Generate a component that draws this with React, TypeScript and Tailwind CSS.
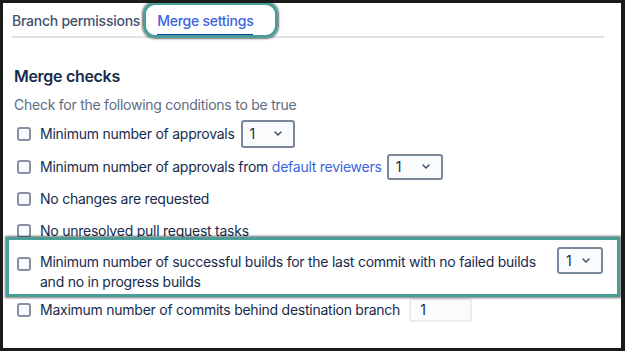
import React from "react";

const Checkbox = () => (
  <span className="block w-[14px] h-[14px] shrink-0 rounded-[3px] border-2 border-[#8590a2] bg-[#fafbfc]" />
);

const Chevron = () => (
  <svg width="8" height="5" viewBox="0 0 8 5" fill="none">
    <path d="M1 1l3 3 3-3" stroke="#42526e" strokeWidth="1.5" strokeLinecap="round" strokeLinejoin="round" />
  </svg>
);

const Select = ({ w, h }: { w: string; h: string }) => (
  <div className={`${w} ${h} shrink-0 flex items-center justify-between pl-[7px] pr-[11px] rounded-[3px] border-2 border-[#7a869a] bg-[#fafbfc] text-[14px] text-[#172b4d]`}>
    <span>1</span>
    <Chevron />
  </div>
);

export default function App() {
  return (
    <div
      className="w-[625px] h-[351px] bg-[#1b1b1b] pt-[3px] pl-[3px] pr-[4px] pb-[3px] tracking-[-0.25px]"
      style={{ fontFamily: "Inter, 'Noto Sans', Arial, sans-serif" }}
    >
      <div className="relative w-full h-full bg-white overflow-hidden">
        {/* Tabs */}
        <div className="ml-[9px] w-[592px] flex gap-[17px] pt-[8px] border-b-2 border-[#dfe1e6] text-[14px] leading-[20px]">
          <div className="pb-[3px] border-b-2 border-transparent text-[#42526e] font-medium">Branch permissions</div>
          <div className="pb-[3px] border-b-2 border-[#0747a6] text-[#3b64e0] font-medium">Merge settings</div>
        </div>

        <div className="pl-[11px] text-[#172b4d]">
          <h2 className="mt-[26px] text-[16px] leading-[24px] font-semibold tracking-[-0.3px] text-[#172b4d]">Merge checks</h2>
          <p className="mt-[7px] text-[14px] leading-[20px] text-[#5e6c84]">Check for the following conditions to be true</p>

          <div className="mt-[2px] flex flex-col text-[14px] leading-[20px]">
            <div className="h-[33px] flex items-center">
              <span className="ml-[3px]"><Checkbox /></span>
              <span className="ml-[9px]">Minimum number of approvals</span>
              <span className="ml-[6px]"><Select w="w-[54px]" h="h-[28px]" /></span>
            </div>
            <div className="h-[33px] flex items-center">
              <span className="ml-[3px]"><Checkbox /></span>
              <span className="ml-[9px]">
                Minimum number of approvals from <span className="text-[#3b64e0]">default reviewers</span>
              </span>
              <span className="ml-[5px]"><Select w="w-[56px]" h="h-[26px]" /></span>
            </div>
            <div className="h-[32px] flex items-center">
              <span className="ml-[3px]"><Checkbox /></span>
              <span className="ml-[9px]">No changes are requested</span>
            </div>
            <div className="h-[32px] flex items-center">
              <span className="ml-[3px]"><Checkbox /></span>
              <span className="ml-[9px]">No unresolved pull request tasks</span>
            </div>
            <div className="h-[45px] flex items-start">
              <span className="ml-[3px] mt-[10px]"><Checkbox /></span>
              <span className="ml-[9px] mt-[5px] w-[508px] leading-[20px]">
                Minimum number of successful builds for the last commit with no failed builds and no in progress builds
              </span>
              <span className="ml-[9px]"><Select w="w-[46px]" h="h-[27px]" /></span>
            </div>
            <div className="mt-[6px] h-[24px] flex items-center">
              <span className="ml-[3px]"><Checkbox /></span>
              <span className="ml-[9px]">Maximum number of commits behind destination branch</span>
              <div className="ml-[9px] w-[63px] h-[24px] flex items-center pl-[9px] rounded-[3px] border-2 border-[#ebecf0] bg-[#fafbfc]">1</div>
            </div>
          </div>
        </div>

        {/* Annotation highlights */}
        <div className="absolute left-[140px] top-[-1px] w-[135px] h-[36px] rounded-[12px] border-[3px] border-[#4b9e97] shadow-[0_0_2px_1px_rgba(0,0,0,0.55)]" />
        <div className="absolute left-[3px] top-[234px] w-[614px] h-[60px] border-[3px] border-[#4b9e97] shadow-[0_0_2px_1px_rgba(0,0,0,0.55)]" />
      </div>
    </div>
  );
}
